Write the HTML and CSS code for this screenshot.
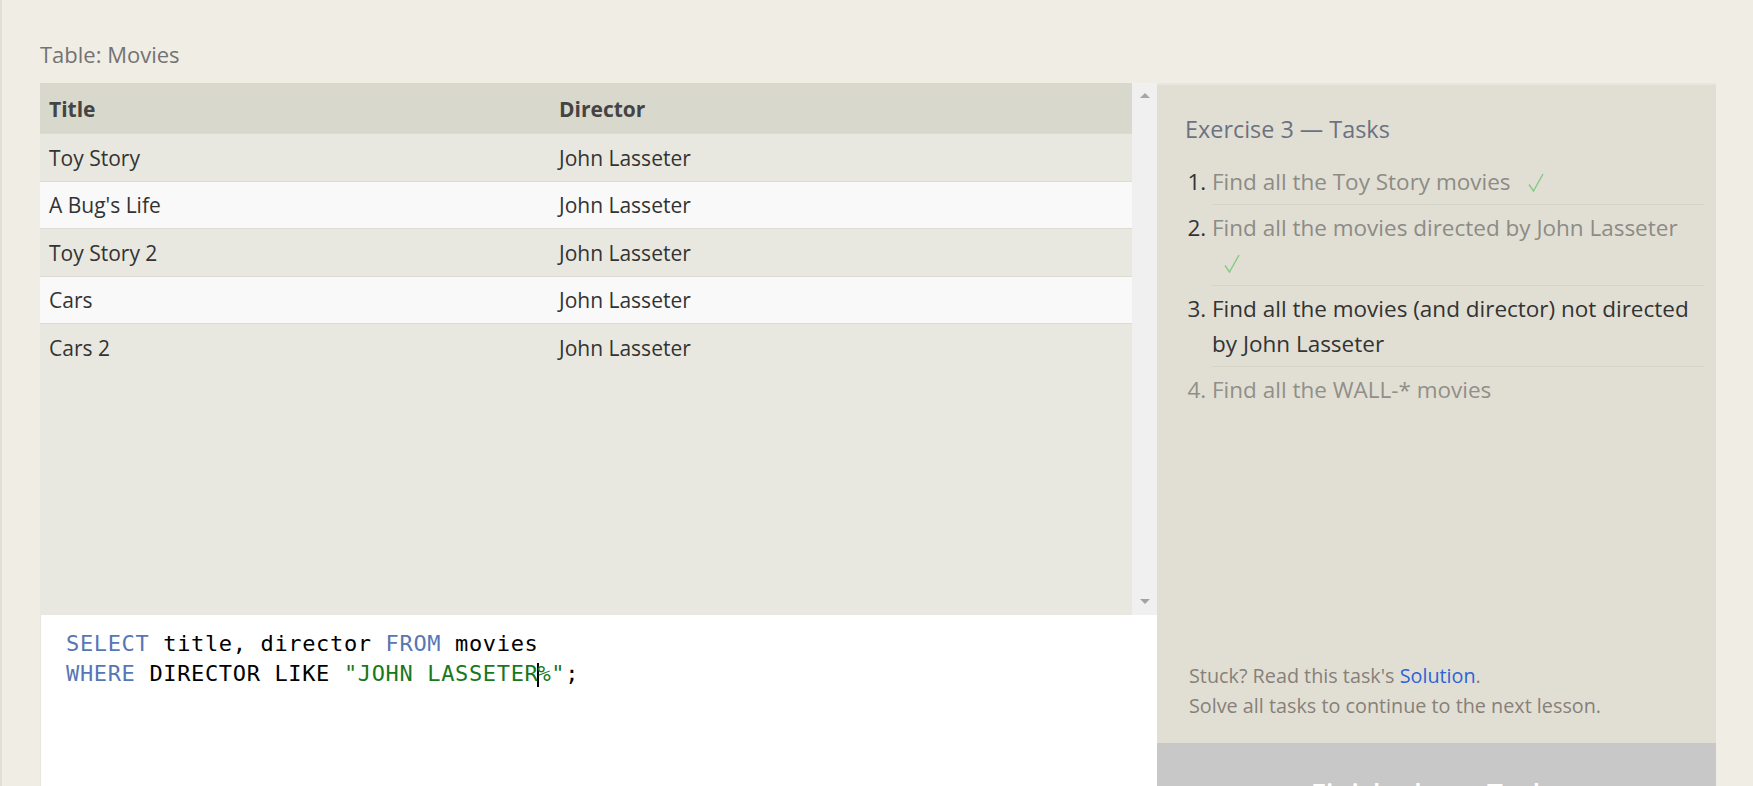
FILE: index.html
```html
<!DOCTYPE html>
<html lang="en">
<head>
<meta charset="utf-8">
<title>SQL Lesson — Exercise 3</title>
<link rel="stylesheet" href="styles.css">
</head>
<body>
<div class="page">
  <h2 class="table-caption">Table: Movies</h2>
  <div class="workspace">
    <div class="left">
      <div class="results">
        <div class="results-scroll">
          <table class="movies">
            <thead>
              <tr><th class="col-title">Title</th><th>Director</th></tr>
            </thead>
            <tbody>
              <tr><td>Toy Story</td><td>John Lasseter</td></tr>
              <tr><td>A Bug's Life</td><td>John Lasseter</td></tr>
              <tr><td>Toy Story 2</td><td>John Lasseter</td></tr>
              <tr><td>Cars</td><td>John Lasseter</td></tr>
              <tr><td>Cars 2</td><td>John Lasseter</td></tr>
            </tbody>
          </table>
        </div>
        <div class="scrollbar">
          <span class="arrow arrow-up"></span>
          <span class="arrow arrow-down"></span>
        </div>
      </div>
      <div class="editor">
<pre class="code"><span class="kw">SELECT</span> title, director <span class="kw">FROM</span> movies
<span class="kw">WHERE</span> DIRECTOR LIKE <span class="str">"JOHN LASSETER<span class="cursor"></span>%"</span>;</pre>
      </div>
    </div>
    <aside class="tasks">
      <div class="tasks-body">
        <h3 class="tasks-title">Exercise 3 — Tasks</h3>
        <ol class="task-list">
          <li class="done"><span class="task-text">Find all the Toy Story movies</span> <svg class="check" width="16" height="19" viewBox="0 0 16 19"><path d="M1 11.5 L5.5 18 L15 1" fill="none" stroke="#86c886" stroke-width="1.4"/></svg></li>
          <li class="done"><span class="task-text">Find all the movies directed by John Lasseter</span> <svg class="check" width="16" height="19" viewBox="0 0 16 19"><path d="M1 11.5 L5.5 18 L15 1" fill="none" stroke="#86c886" stroke-width="1.4"/></svg></li>
          <li class="current">Find all the movies (and director) not directed by John Lasseter</li>
          <li class="todo">Find all the WALL-* movies</li>
        </ol>
      </div>
      <p class="help">Stuck? Read this task's <a class="solution" href="#">Solution</a>.<br>Solve all tasks to continue to the next lesson.</p>
      <div class="finish">Finish above Tasks</div>
    </aside>
  </div>
</div>
</body>
</html>
```

FILE: styles.css
```css
html, body {
  margin: 0;
  padding: 0;
  overflow: hidden;
  background: #f0ede5;
}

.page {
  border-left: 2px solid #e2dfd6;
  padding: 39px 37px 0 38px;
  min-height: 786px;
  box-sizing: border-box;
  font-family: "Open Sans", "Noto Sans", sans-serif;
}

.table-caption {
  margin: 0 0 14px;
  font-size: 22px;
  line-height: 30px;
  font-weight: 400;
  color: #737373;
}

.workspace {
  display: flex;
  height: 732px;
}

.left {
  width: 1117px;
  display: flex;
  flex-direction: column;
}

.results {
  height: 532px;
  display: flex;
  background: #e9e8e0;
}

.results-scroll {
  flex: 1;
}

.movies {
  width: 100%;
  border-collapse: collapse;
  font-size: 21px;
  color: #333;
}

.movies th {
  text-align: left;
  font-weight: 700;
  color: #444;
  background: #d9d8cc;
  height: 48px;
  padding: 2px 9px 0;
  border-bottom: 1px solid #dcdbd2;
}

.movies .col-title {
  width: 492px;
}

.movies td {
  height: 45.5px;
  padding: 1px 9px 0;
  border-bottom: 1px solid #dddcd4;
}

.movies tbody tr:nth-child(even) td {
  background: #f9f9f9;
}

.movies tbody tr:last-child td {
  border-bottom: none;
}

.scrollbar {
  width: 25px;
  background: #f0f0f0;
  display: flex;
  flex-direction: column;
  justify-content: space-between;
  align-items: center;
  padding: 10px 0 11px;
  box-sizing: border-box;
}

.arrow {
  width: 0;
  height: 0;
  border-left: 5.5px solid transparent;
  border-right: 5.5px solid transparent;
}

.arrow-up {
  border-bottom: 5px solid #a6a6a6;
}

.arrow-down {
  border-top: 5px solid #a3a3a3;
}

.editor {
  flex: 1;
  background: #fff;
  border-left: 1px solid #e8e6df;
}

.code {
  margin: 0;
  padding: 14px 25px;
  font-family: "DejaVu Sans Mono", "Liberation Mono", monospace;
  font-size: 22px;
  letter-spacing: 0.65px;
  line-height: 30px;
  color: #000;
}

.kw {
  color: #5676b6;
}

.str {
  color: #18781c;
}

.cursor {
  display: inline-block;
  width: 2px;
  height: 24px;
  margin: 0 -1.5px 0 -1.5px;
  background: #000;
  vertical-align: -6px;
}

.tasks {
  width: 559px;
  border-top: 2px solid #e8e6dd;
  background: #e1dfd4;
  display: flex;
  flex-direction: column;
}

.tasks-body {
  padding: 29px 12px 0 28px;
}

.tasks-title {
  margin: 0 0 15px;
  font-size: 23.4px;
  line-height: 30px;
  font-weight: 400;
  color: #6b7282;
}

.task-list {
  margin: 0;
  padding-left: 27px;
  font-size: 22.5px;
  line-height: 35px;
}

.task-list li {
  padding: 5px 0;
  border-bottom: 1px solid #d6d4c9;
}

.task-list li:last-child {
  border-bottom: none;
}

.task-list .done {
  color: #333;
}

.task-list .done .task-text {
  color: #8d8b86;
}

.task-list .current {
  color: #333;
}

.task-list .todo {
  color: #918f89;
}

.check {
  margin-left: 12px;
  vertical-align: -2px;
}

.help {
  margin: auto 0 0;
  padding: 0 12px 22px 32px;
  font-size: 19.8px;
  line-height: 30px;
  color: #878079;
}

.solution {
  color: #2d62d8;
  text-decoration: none;
}

.finish {
  height: 72px;
  box-sizing: border-box;
  padding-top: 32px;
  background: #c8c8c8;
  color: #fff;
  font-size: 28px;
  font-weight: 600;
  text-align: center;
}
```
